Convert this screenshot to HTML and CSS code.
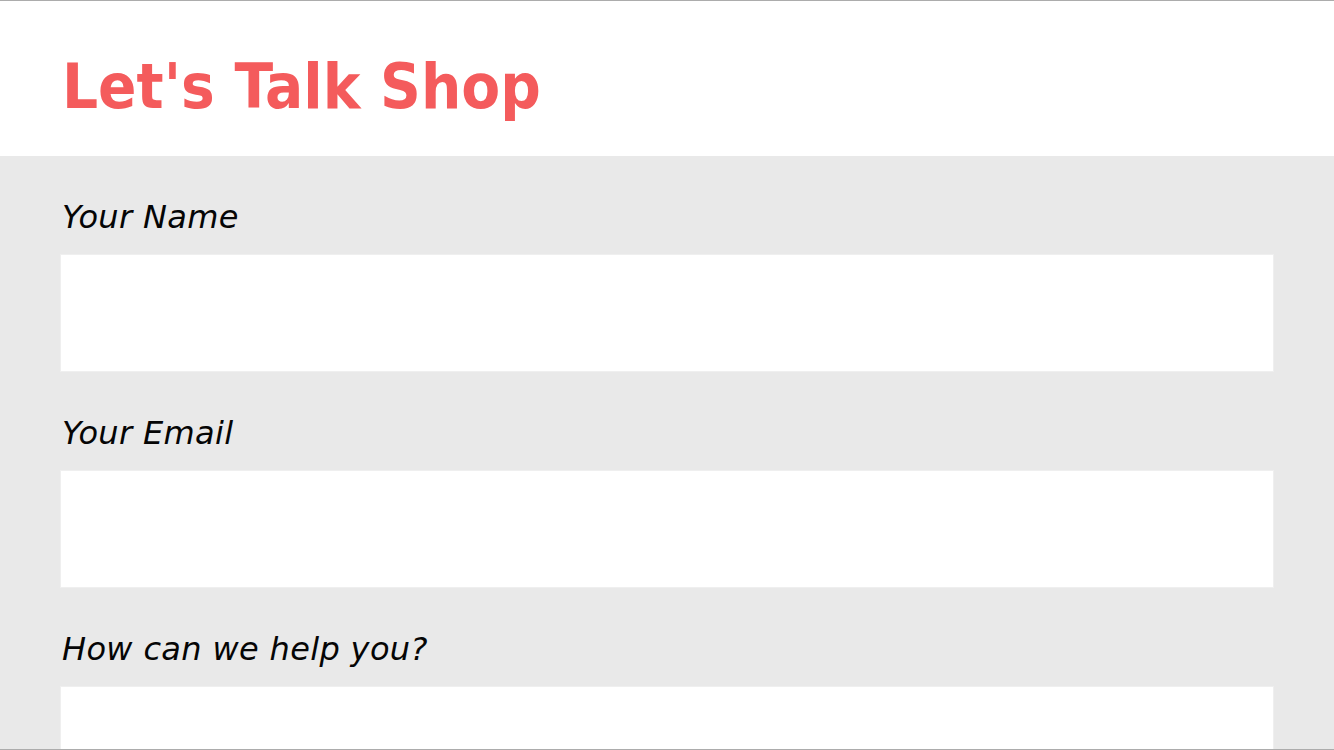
FILE: index.html
```html
<!DOCTYPE html>
<html lang="en">
<head>
<meta charset="utf-8">
<title>Let's Talk Shop</title>
<link rel="stylesheet" href="styles.css">
</head>
<body>
<div class="frame">
  <header class="header">
    <h1 class="title">Let's Talk Shop</h1>
  </header>
  <form class="form">
    <div class="field">
      <label class="label" for="name">Your Name</label>
      <input class="input" id="name" type="text">
    </div>
    <div class="field">
      <label class="label" for="email">Your Email</label>
      <input class="input" id="email" type="email">
    </div>
    <div class="field">
      <label class="label" for="help">How can we help you?</label>
      <textarea class="input textarea" id="help"></textarea>
    </div>
  </form>
</div>
</body>
</html>
```
FILE: styles.css
```css
html, body {
  margin: 0;
  padding: 0;
  background: #ffffff;
}
.frame {
  box-sizing: border-box;
  width: 1334px;
  height: 750px;
  overflow: hidden;
  border-top: 1px solid #acacac;
  border-bottom: 1px solid #acacac;
  display: flex;
  flex-direction: column;
  background: #e9e9e9;
}
.header {
  box-sizing: border-box;
  height: 155px;
  flex: none;
  background: #ffffff;
  padding: 54px 62px 0;
}
.title {
  margin: 0;
  font-family: "DejaVu Sans Condensed", "DejaVu Sans", sans-serif;
  font-stretch: semi-condensed;
  font-weight: bold;
  font-size: 63px;
  line-height: 1;
  color: #f45b5c;
}
.form {
  flex: 1;
  display: flex;
  flex-direction: column;
  padding: 45px 60px 0;
  gap: 45px;
}
.field {
  display: flex;
  flex-direction: column;
  gap: 21px;
}
.label {
  font-family: "DejaVu Sans", sans-serif;
  font-style: oblique;
  font-size: 32px;
  line-height: 32px;
  height: 32px;
  letter-spacing: 0.35px;
  color: #050505;
  padding-left: 2px;
}
.input {
  box-sizing: border-box;
  display: block;
  width: 100%;
  height: 118px;
  margin: 0;
  border: 1px solid #efefef;
  border-radius: 0;
  background: #ffffff;
  outline: none;
  font-family: "DejaVu Sans", sans-serif;
  font-size: 28px;
  padding: 0 20px;
}
.textarea {
  resize: none;
  flex: none;
}
```
